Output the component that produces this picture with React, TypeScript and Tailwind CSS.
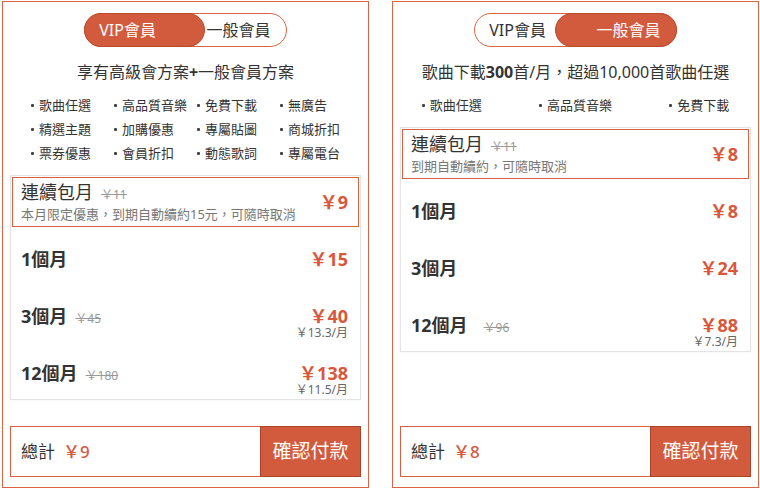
/**
 * MembershipPlans — VIP / 一般會員 pricing panels, side by side
 */
import type { ReactNode } from "react";

type Plan = {
  title: string;
  old?: string;
  note?: string;
  price: string;
  perMonth?: string;
  oldGap?: string;
};

type PanelProps = {
  vip: boolean;
  heading: ReactNode;
  features: string[];
  grid: boolean;
  plans: Plan[];
  total: string;
};

const vipFeatures = [
  "歌曲任選", "高品質音樂", "免費下載", "無廣告",
  "精選主題", "加購優惠", "專屬貼圖", "商城折扣",
  "票券優惠", "會員折扣", "動態歌詞", "專屬電台",
];

const vipPlans: Plan[] = [
  { title: "連續包月", old: "￥11", note: "本月限定優惠，到期自動續約15元，可隨時取消", price: "￥9" },
  { title: "1個月", price: "￥15" },
  { title: "3個月", old: "￥45", price: "￥40", perMonth: "￥13.3/月" },
  { title: "12個月", old: "￥180", price: "￥138", perMonth: "￥11.5/月" },
];

const basicPlans: Plan[] = [
  { title: "連續包月", old: "￥11", note: "到期自動續約，可隨時取消", price: "￥8" },
  { title: "1個月", price: "￥8" },
  { title: "3個月", price: "￥24" },
  { title: "12個月", old: "￥96", price: "￥88", perMonth: "￥7.3/月", oldGap: "ml-4" },
];

function Toggle({ vip }: { vip: boolean }) {
  return (
    <div className="relative mx-auto mt-[11px] flex h-[34px] w-[203px] items-center rounded-full border border-[#dc6442] text-[16px]">
      <div
        className={
          vip
            ? "absolute -inset-y-px -left-px w-[121px] rounded-full border border-[#b9482d] bg-[#d25b3e]"
            : "absolute -inset-y-px -right-px w-[122px] rounded-full border border-[#b9482d] bg-[#d25b3e]"
        }
      />
      <span className={vip ? "relative w-[86px] text-center text-white" : "relative w-[86px] text-center text-[#333]"}>
        VIP會員
      </span>
      <span className={vip ? "relative ml-[21px] w-[96px] text-center text-[#333]" : "relative ml-[21px] w-[96px] text-center text-white"}>
        一般會員
      </span>
    </div>
  );
}

function Feature({ label }: { label: string }) {
  return (
    <div className="flex items-center text-[13px] leading-6 text-[#333]">
      <span className="mr-[5px] inline-block h-[3px] w-[3px] rounded-[1px] bg-[#444]" />
      {label}
    </div>
  );
}

function PlanRow({ plan, first }: { plan: Plan; first: boolean }) {
  if (first) {
    return (
      <div className="flex h-[50px] items-center justify-between border border-[#d9603f] pl-[8px] pr-[10px]">
        <div>
          <div className="flex items-baseline leading-5">
            <span className="text-[18px] text-[#333]">{plan.title}</span>
            <span className="ml-2 text-[12px] text-[#999] line-through">{plan.old}</span>
          </div>
          <div className="text-[13px] leading-[18px] text-[#777]">{plan.note}</div>
        </div>
        <span className="text-[18px] font-bold text-[#d9573a]">{plan.price}</span>
      </div>
    );
  }
  return (
    <div className="flex h-[57px] items-start justify-between pl-[9px] pr-[11px] pt-[21px]">
      <div className="flex items-baseline leading-[22px]">
        <span className="text-[18px] font-bold text-[#333]">{plan.title}</span>
        {plan.old && (
          <span className={`${plan.oldGap ?? "ml-2"} text-[12px] text-[#999] line-through`}>{plan.old}</span>
        )}
      </div>
      <div className="text-right">
        <div className="text-[18px] font-bold leading-[22px] text-[#d9573a]">{plan.price}</div>
        {plan.perMonth && <div className="text-[12px] leading-[12px] text-[#666]">{plan.perMonth}</div>}
      </div>
    </div>
  );
}

function Panel({ vip, heading, features, grid, plans, total }: PanelProps) {
  return (
    <div className="flex h-[487px] w-[367px] flex-col border border-[#dc6442] bg-white">
      <Toggle vip={vip} />

      <div className="mt-[13px] text-center text-[16px] leading-6 text-[#333]">{heading}</div>

      {grid ? (
        <div className="mt-[9px] grid grid-cols-[83px_83px_83px_83px] pl-[28px]">
          {features.map(f => <Feature key={f} label={f} />)}
        </div>
      ) : (
        <div className="mt-[9px] flex justify-around">
          {features.map(f => <Feature key={f} label={f} />)}
        </div>
      )}

      <div className="mx-[7px] mt-[10px] border border-[#e4e4e4] p-px shadow-[0_0_2px_rgba(0,0,0,0.06)]">
        {plans.map((p, i) => <PlanRow key={p.title} plan={p} first={i === 0} />)}
      </div>

      <div className="mx-[7px] mb-[10px] mt-auto flex h-[51px] items-center border border-[#d9603f]">
        <div className="flex flex-1 items-center pl-[10px] text-[17px]">
          <span className="text-[#333]">總計</span>
          <span className="ml-[8px] font-medium text-[#d9573a]">{total}</span>
        </div>
        <button className="-my-px -mr-px flex h-[51px] w-[101px] items-center justify-center border border-[#a9442a] bg-[#d25b3e] text-[19px] text-white">
          確認付款
        </button>
      </div>
    </div>
  );
}

export default function App() {
  return (
    <div className="flex h-[490px] w-[760px] gap-[23px] bg-white pl-[2px] pt-px font-['Noto_Sans','Noto_Sans_CJK_TC',sans-serif]">
      <Panel
        vip
        heading={<>享有高級會方案<b>+</b>一般會員方案</>}
        features={vipFeatures}
        grid
        plans={vipPlans}
        total="￥9"
      />
      <Panel
        vip={false}
        heading={<>歌曲下載<b>300</b>首/月，超過10,000首歌曲任選</>}
        features={["歌曲任選", "高品質音樂", "免費下載"]}
        grid={false}
        plans={basicPlans}
        total="￥8"
      />
    </div>
  );
}
